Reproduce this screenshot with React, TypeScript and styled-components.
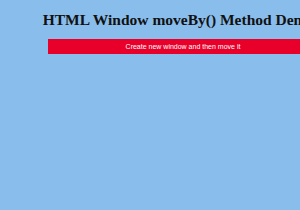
import React from 'react';
import styled, { createGlobalStyle } from 'styled-components';

const GlobalStyle = createGlobalStyle`
  html, body {
    margin: 0;
    padding: 0;
    background: #89bdeb;
    overflow: hidden;
  }
`;

const Page = styled.div`
  width: 357px;
  height: 210px;
  padding-top: 11px;
  box-sizing: border-box;
  display: flex;
  flex-direction: column;
`;

const Title = styled.h1`
  margin: 0;
  font-family: 'Liberation Serif', serif;
  font-weight: 700;
  font-size: 15.5px;
  line-height: 18px;
  color: #111;
  text-align: center;
  white-space: nowrap;
`;

const Button = styled.button`
  margin: 10px 0 0 48px;
  width: 270px;
  height: 15px;
  padding: 0;
  border: none;
  background: #e8002b;
  color: #fff;
  font-family: 'Liberation Sans', Arial, sans-serif;
  font-size: 7px;
  cursor: pointer;
`;

const App = () => (
  <>
    <GlobalStyle />
    <Page>
      <Title>HTML Window moveBy() Method Demo</Title>
      <Button>Create new window and then move it</Button>
    </Page>
  </>
);

export default App;
